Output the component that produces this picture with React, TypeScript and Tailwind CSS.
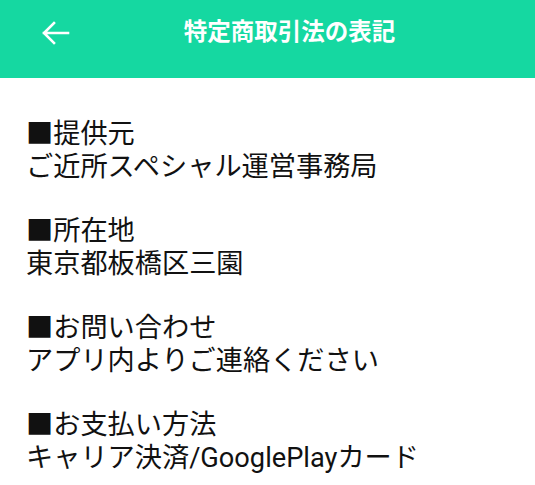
import * as React from "react";

const sections = [
  { label: "提供元", value: "ご近所スペシャル運営事務局" },
  { label: "所在地", value: "東京都板橋区三園" },
  { label: "お問い合わせ", value: "アプリ内よりご連絡ください" },
  { label: "お支払い方法", value: "キャリア決済/GooglePlayカード" },
];

export default function App() {
  return (
    <div className="min-h-screen bg-white font-['Roboto','Noto_Sans_CJK_JP',sans-serif]">
      {/* Header */}
      <header className="h-[78px] bg-[#15d8a1] text-white">
        <div className="flex h-[65px] items-center">
          <button className="flex w-[44px] items-center justify-end" aria-label="戻る">
            <svg width="30" height="24" viewBox="0 0 30 24" fill="none" className="-mr-[27px]">
              <path
                d="M27 12H3M13 2L3 12l10 10"
                stroke="white"
                strokeWidth="2.6"
                strokeLinecap="square"
              />
            </svg>
          </button>
          <h1 className="flex-1 text-center text-[23.5px] font-bold">
            特定商取引法の表記
          </h1>
        </div>
      </header>

      {/* Content */}
      <div className="px-[26px] pt-[40px] text-[27.2px] leading-[33px] text-[#111]">
        {sections.map((s, i) => (
          <div key={s.label} className={i > 0 ? "mt-[31px]" : ""}>
            <p>■{s.label}</p>
            <p>{s.value}</p>
          </div>
        ))}
      </div>
    </div>
  );
}
